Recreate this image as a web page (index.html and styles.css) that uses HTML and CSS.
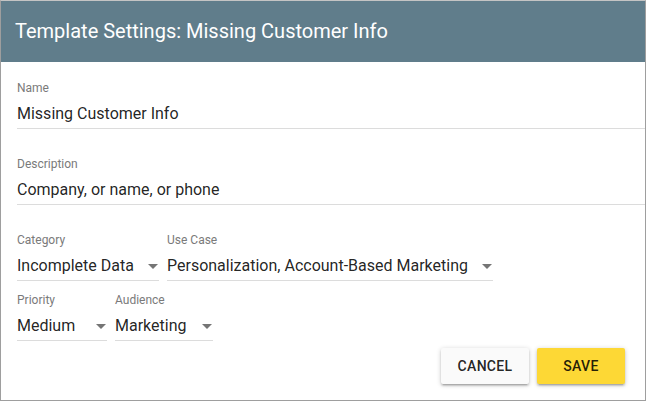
FILE: index.html
```html
<!DOCTYPE html>
<html>
<head>
<meta charset="utf-8">
<link rel="stylesheet" href="styles.css">
</head>
<body>
<div class="dialog">
  <div class="header">Template Settings: Missing Customer Info</div>
  <div class="content">
    <div class="field full">
      <div class="label">Name</div>
      <div class="value">Missing Customer Info</div>
    </div>
    <div class="field full gap-lg">
      <div class="label">Description</div>
      <div class="value">Company, or name, or phone</div>
    </div>
    <div class="row gap-xl">
      <div class="field select w-category">
        <div class="label">Category</div>
        <div class="value">Incomplete Data<svg class="arrow" viewBox="0 0 10 5"><path d="M0 0h10L5 5z"/></svg></div>
      </div>
      <div class="field select w-usecase">
        <div class="label">Use Case</div>
        <div class="value">Personalization, Account-Based Marketing<svg class="arrow" viewBox="0 0 10 5"><path d="M0 0h10L5 5z"/></svg></div>
      </div>
    </div>
    <div class="row gap-sm">
      <div class="field select w-priority">
        <div class="label">Priority</div>
        <div class="value">Medium<svg class="arrow" viewBox="0 0 10 5"><path d="M0 0h10L5 5z"/></svg></div>
      </div>
      <div class="field select w-audience">
        <div class="label">Audience</div>
        <div class="value">Marketing<svg class="arrow" viewBox="0 0 10 5"><path d="M0 0h10L5 5z"/></svg></div>
      </div>
    </div>
    <div class="actions">
      <button class="btn cancel">Cancel</button>
      <button class="btn save">Save</button>
    </div>
  </div>
</div>
</body>
</html>
```

FILE: styles.css
```css
html, body {
  margin: 0;
  padding: 0;
  background: #ffffff;
}
body {
  font-family: Roboto, "Liberation Sans", sans-serif;
}
.dialog {
  box-sizing: border-box;
  width: 646px;
  height: 401px;
  border: 1px solid #9e9e9e;
  border-top-color: #c4c4c4;
  background: #ffffff;
  overflow: hidden;
}
.header {
  height: 61px;
  background: #607d8b;
  color: #ffffff;
  font-size: 20px;
  line-height: 61px;
  padding-left: 14px;
  box-sizing: border-box;
}
.content {
  padding: 19px 0 0 16px;
}
.field {
  border-bottom: 1px solid #dcdcdc;
  box-sizing: border-box;
}
.label {
  font-size: 12px;
  line-height: 14px;
  color: #7a7a7a;
  margin-bottom: 9px;
}
.value {
  font-size: 16px;
  line-height: 20px;
  color: rgba(0, 0, 0, 0.87);
  padding-bottom: 4px;
  display: flex;
  align-items: center;
  justify-content: space-between;
  white-space: nowrap;
}
.gap-lg { margin-top: 28px; }
.row {
  display: flex;
  gap: 8px;
}
.gap-xl { margin-top: 28px; }
.gap-sm { margin-top: 12px; }
.w-category { width: 142px; }
.w-usecase { width: 326px; }
.w-priority { width: 90px; }
.w-audience { width: 98px; }
.arrow {
  width: 10px;
  height: 5px;
  fill: #757575;
  margin-right: 1px;
  flex: none;
}
.actions {
  display: flex;
  justify-content: flex-end;
  gap: 8px;
  margin-top: 7px;
  padding-right: 20px;
}
.btn {
  width: 88px;
  height: 36px;
  border: none;
  border-radius: 2px;
  font-family: Roboto, "Liberation Sans", sans-serif;
  font-size: 14px;
  font-weight: 500;
  text-transform: uppercase;
  letter-spacing: 0.3px;
  color: rgba(0, 0, 0, 0.87);
  box-shadow: 0 1px 5px rgba(0,0,0,0.2), 0 2px 2px rgba(0,0,0,0.14), 0 3px 1px -2px rgba(0,0,0,0.12);
  padding: 0;
}
.cancel { background: #fafafa; }
.save { background: #fdd835; }
```
